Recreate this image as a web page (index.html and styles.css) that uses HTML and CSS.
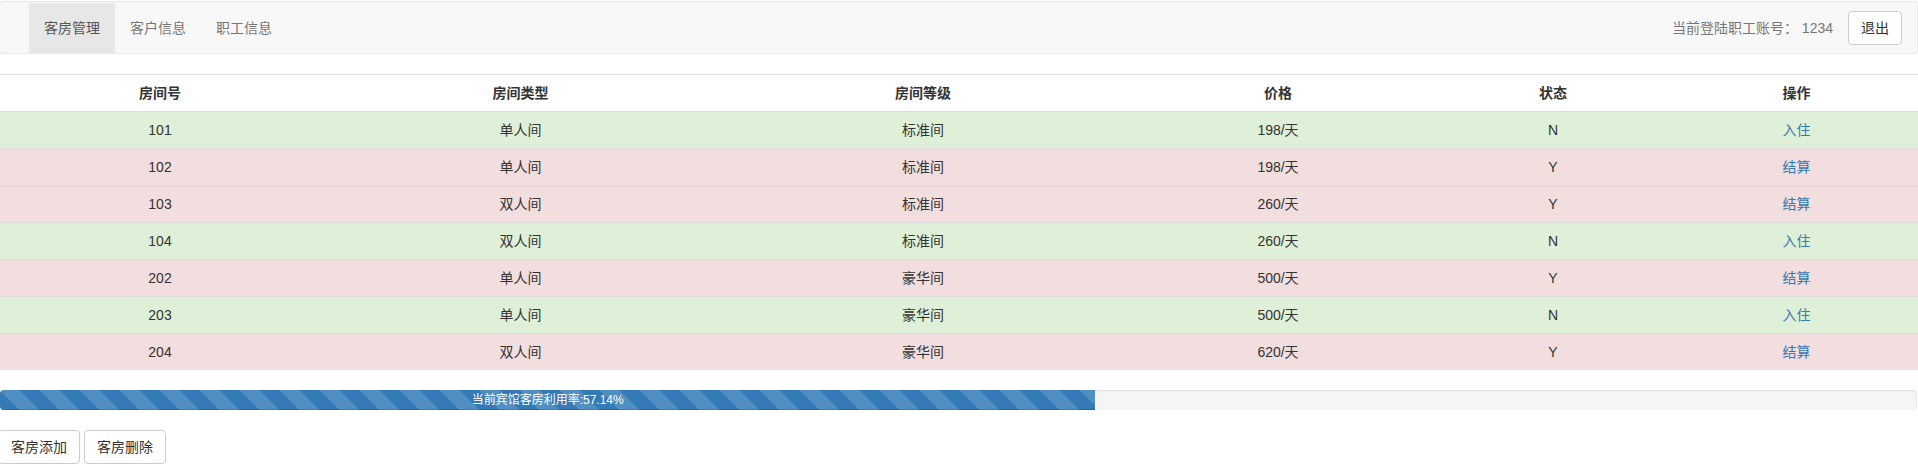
FILE: index.html
```html
<!DOCTYPE html>
<html lang="zh-CN">
<head>
<meta charset="utf-8">
<title>客房管理</title>
<link rel="stylesheet" href="styles.css">
</head>
<body>
<nav class="navbar">
  <ul class="nav-list">
    <li class="nav-item active"><a href="#">客房管理</a></li>
    <li class="nav-item"><a href="#">客户信息</a></li>
    <li class="nav-item"><a href="#">职工信息</a></li>
  </ul>
  <div class="nav-right">
    <span class="nav-text">当前登陆职工账号： 1234</span>
    <button class="btn">退出</button>
  </div>
</nav>

<table class="rooms">
  <colgroup>
    <col class="c1"><col class="c2"><col class="c3"><col class="c4"><col class="c5"><col class="c6">
  </colgroup>
  <thead>
    <tr><th>房间号</th><th>房间类型</th><th>房间等级</th><th>价格</th><th>状态</th><th>操作</th></tr>
  </thead>
  <tbody>
    <tr class="success"><td>101</td><td>单人间</td><td>标准间</td><td>198/天</td><td>N</td><td><a href="#">入住</a></td></tr>
    <tr class="danger"><td>102</td><td>单人间</td><td>标准间</td><td>198/天</td><td>Y</td><td><a href="#">结算</a></td></tr>
    <tr class="danger"><td>103</td><td>双人间</td><td>标准间</td><td>260/天</td><td>Y</td><td><a href="#">结算</a></td></tr>
    <tr class="success"><td>104</td><td>双人间</td><td>标准间</td><td>260/天</td><td>N</td><td><a href="#">入住</a></td></tr>
    <tr class="danger"><td>202</td><td>单人间</td><td>豪华间</td><td>500/天</td><td>Y</td><td><a href="#">结算</a></td></tr>
    <tr class="success"><td>203</td><td>单人间</td><td>豪华间</td><td>500/天</td><td>N</td><td><a href="#">入住</a></td></tr>
    <tr class="danger"><td>204</td><td>双人间</td><td>豪华间</td><td>620/天</td><td>Y</td><td><a href="#">结算</a></td></tr>
  </tbody>
</table>

<div class="progress">
  <div class="progress-bar" style="width: 57.14%;">当前宾馆客房利用率:57.14%</div>
</div>

<div class="actions">
  <button class="btn">客房添加</button>
  <button class="btn">客房删除</button>
</div>
</body>
</html>
```

FILE: styles.css
```css
* { box-sizing: border-box; }

html, body {
  margin: 0;
  padding: 0;
  background: #fff;
}

body {
  font-family: "Helvetica Neue", Helvetica, "Liberation Sans", Arial, "Noto Sans CJK SC", sans-serif;
  font-size: 14px;
  line-height: 20px;
  color: #333;
  overflow: hidden;
}

a { color: #337ab7; text-decoration: none; }

.navbar {
  display: flex;
  justify-content: space-between;
  align-items: flex-start;
  margin: 1px 0 20px -1px;
  background: #f8f8f8;
  border: 1px solid #e7e7e7;
  border-radius: 4px;
  padding-top: 1px;
}

.nav-list {
  display: flex;
  list-style: none;
  margin: 0;
  padding: 0 0 0 29px;
}

.nav-item a {
  display: block;
  padding: 15px;
  line-height: 20px;
  color: #777;
}

.nav-item.active a {
  background: #e7e7e7;
  color: #555;
}

.nav-right {
  display: flex;
  align-items: flex-start;
  gap: 15px;
  padding-right: 15px;
}

.nav-text {
  margin-top: 15px;
  color: #777;
  line-height: 20px;
}

.btn {
  display: inline-block;
  font-family: inherit;
  font-size: 14px;
  line-height: 20px;
  padding: 6px 12px;
  color: #333;
  background: #fff;
  border: 1px solid #ccc;
  border-radius: 4px;
  cursor: pointer;
}

.nav-right .btn { margin-top: 8px; }

.rooms {
  width: 100%;
  border-collapse: collapse;
  border-spacing: 0;
  table-layout: fixed;
  margin-bottom: 20px;
}

.rooms .c1 { width: 320px; }
.rooms .c2 { width: 401px; }
.rooms .c3 { width: 404px; }
.rooms .c4 { width: 306px; }
.rooms .c5 { width: 244px; }
.rooms .c6 { width: 243px; }

.rooms th,
.rooms td {
  padding: 8px;
  line-height: 20px;
  text-align: center;
  border-top: 1px solid #ddd;
  vertical-align: top;
}

.rooms th { font-weight: bold; }

.rooms tr.success td { background: #dff0d8; }
.rooms tr.danger td { background: #f2dede; }

.progress {
  height: 20px;
  margin-bottom: 20px;
  margin-right: 1px;
  overflow: hidden;
  background: #f5f5f5;
  border-radius: 4px;
  box-shadow: inset 0 1px 2px rgba(0, 0, 0, .1);
}

.progress-bar {
  height: 100%;
  font-size: 12px;
  line-height: 20px;
  color: #fff;
  text-align: center;
  background-color: #337ab7;
  background-image: linear-gradient(45deg, rgba(255,255,255,.15) 25%, transparent 25%, transparent 50%, rgba(255,255,255,.15) 50%, rgba(255,255,255,.15) 75%, transparent 75%, transparent);
  background-size: 40px 40px;
  box-shadow: inset 0 -1px 0 rgba(0, 0, 0, .15);
  white-space: nowrap;
}

.actions {
  display: flex;
  gap: 4px;
  margin-left: -2px;
}
```
